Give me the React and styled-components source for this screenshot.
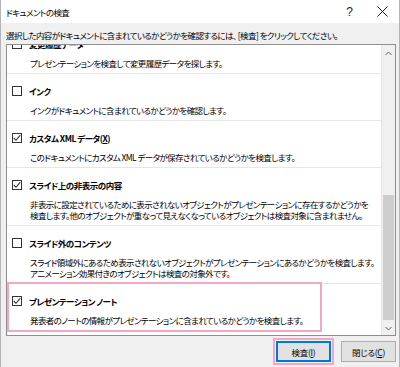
import React from "react";
import styled, { createGlobalStyle } from "styled-components";

const Global = createGlobalStyle`
  html, body { margin: 0; padding: 0; background: #f0f0f0; }
  body {
    font-family: "Noto Sans CJK JP", "Noto Sans", sans-serif;
    font-feature-settings: "palt";
    color: #000;
  }
`;

const Window = styled.div`
  width: 400px;
  height: 367px;
  box-sizing: border-box;
  background: #f0f0f0;
  border-left: 1px solid #b4b4b4;
  border-right: 1px solid #b4b4b4;
  display: flex;
  flex-direction: column;
  overflow: hidden;
`;

const TitleBar = styled.div`
  height: 23px;
  flex: none;
  background: #fff;
  display: flex;
  align-items: center;
  padding-left: 5px;
  font-size: 8.5px;
  letter-spacing: -0.6px;
`;

const TitleText = styled.div`
  flex: 1;
  line-height: 14px;
  padding-top: 1px;
`;

const TitleButton = styled.div`
  width: 33px;
  height: 23px;
  display: flex;
  align-items: center;
  justify-content: center;
  font-family: "Liberation Sans", sans-serif;
  font-size: 12px;
  letter-spacing: 0;
  color: #222;
`;

const Prompt = styled.div`
  font-size: 8.5px;
  letter-spacing: -0.6px;
  padding: 4px 0 0 5px;
  height: 17px;
  flex: none;
  line-height: 16px;
  white-space: nowrap;
`;

const ListBox = styled.div`
  margin: 0 3px 0 5px;
  height: 290px;
  flex: none;
  border: 1px solid #8f8f8f;
  background: #fff;
  display: flex;
`;

const Items = styled.div`
  flex: 1;
  overflow: hidden;
`;

const ItemsInner = styled.div`
  margin-top: -18px;
`;

const Item = styled.div`
  position: relative;
  padding: 10px 0 4px 0;
  border-bottom: 1px solid #e6e6e6;
  &:last-child { border-bottom: none; }
  ${(p) =>
    p.$highlight &&
    `
    &::after {
      content: "";
      position: absolute;
      left: 0;
      top: -2px;
      width: 315px;
      height: 50px;
      box-sizing: border-box;
      border: 2px solid #f2a7c6;
      pointer-events: none;
    }
  `}
`;

const ItemTitle = styled.div`
  display: flex;
  align-items: center;
  height: 14px;
  line-height: 14px;
  padding-left: 5px;
  font-size: 8.5px;
  letter-spacing: -0.5px;
  font-weight: bold;
  white-space: nowrap;
`;

const Box = styled.div`
  width: 10px;
  height: 10px;
  border: 1px solid #333;
  box-sizing: border-box;
  margin-right: 7px;
  display: flex;
  align-items: center;
  justify-content: center;
  background: #fff;
  flex: none;
`;

const Desc = styled.div`
  margin-top: 7px;
  padding-left: 23px;
  font-size: 8.5px;
  letter-spacing: -0.6px;
  line-height: 11px;
  white-space: nowrap;
`;

const Scrollbar = styled.div`
  width: 13px;
  flex: none;
  background: #f0f0f0;
  border-left: 1px solid #e4e4e4;
  display: flex;
  flex-direction: column;
  align-items: center;
`;

const Arrow = styled.div`
  height: 17px;
  flex: none;
  display: flex;
  align-items: center;
  justify-content: center;
`;

const Track = styled.div`
  flex: 1;
  width: 100%;
  display: flex;
  flex-direction: column;
  padding-top: ${(p) => p.$offset}px;
  box-sizing: border-box;
`;

const Thumb = styled.div`
  height: ${(p) => p.$size}px;
  margin: 0 1px;
  background: #cdcdcd;
`;

const Footer = styled.div`
  flex: 1;
  display: flex;
  justify-content: flex-end;
  align-items: flex-start;
  gap: 10px;
  padding: 5px 3px 0 0;
`;

const Button = styled.button`
  position: relative;
  width: ${(p) => p.$w}px;
  height: 21px;
  box-sizing: border-box;
  background: #e1e1e1;
  border: 1px solid ${(p) => (p.$default ? "#0078d7" : "#adadad")};
  box-shadow: ${(p) => (p.$default ? "inset 0 0 0 1px #0078d7" : "none")};
  font-family: inherit;
  font-feature-settings: "palt";
  font-size: 8.5px;
  letter-spacing: -0.3px;
  line-height: 12px;
  color: #000;
  padding: 0;
  ${(p) =>
    p.$highlight &&
    `
    &::after {
      content: "";
      position: absolute;
      inset: -4px;
      border: 2px solid #f2a7c6;
      pointer-events: none;
    }
  `}
`;

const U = styled.span`
  text-decoration: underline;
`;

const Check = ({ checked }) => (
  <Box>
    {checked && (
      <svg width="8" height="8" viewBox="0 0 8 8">
        <polyline points="0.8,4 3,6.3 7.3,1.2" fill="none" stroke="#333" strokeWidth="1.1" />
      </svg>
    )}
  </Box>
);

const items = [
  { title: "変更履歴データ", checked: false, desc: ["プレゼンテーションを検査して変更履歴データを探します。"] },
  { title: "インク", checked: false, desc: ["インクがドキュメントに含まれているかどうかを確認します。"] },
  {
    title: (
      <>
        カスタム XML データ(<U>X</U>)
      </>
    ),
    checked: true,
    desc: ["このドキュメントにカスタム XML データが保存されているかどうかを検査します。"],
  },
  {
    title: "スライド上の非表示の内容",
    checked: true,
    desc: [
      "非表示に設定されているために表示されないオブジェクトがプレゼンテーションに存在するかどうかを",
      "検査します。他のオブジェクトが重なって見えなくなっているオブジェクトは検査対象に含まれません。",
    ],
  },
  {
    title: "スライド外のコンテンツ",
    checked: false,
    desc: [
      "スライド領域外にあるため表示されないオブジェクトがプレゼンテーションにあるかどうかを検査します。",
      "アニメーション効果付きのオブジェクトは検査の対象外です。",
    ],
  },
  {
    title: "プレゼンテーション ノート",
    checked: true,
    highlight: true,
    desc: ["発表者のノートの情報がプレゼンテーションに含まれているかどうかを検査します。"],
  },
];

export default function App() {
  return (
    <>
      <Global />
      <Window>
        <TitleBar>
          <TitleText>ドキュメントの検査</TitleText>
          <TitleButton>?</TitleButton>
          <TitleButton>
            <svg width="11" height="11" viewBox="0 0 11 11">
              <path d="M0.5 0.5 L10.5 10.5 M10.5 0.5 L0.5 10.5" stroke="#222" strokeWidth="1" />
            </svg>
          </TitleButton>
        </TitleBar>
        <Prompt>選択した内容がドキュメントに含まれているかどうかを確認するには、 [検査] をクリックしてください。</Prompt>
        <ListBox>
          <Items>
            <ItemsInner>
              {items.map((it, i) => (
                <Item key={i} $highlight={it.highlight}>
                  <ItemTitle>
                    <Check checked={it.checked} />
                    <span>{it.title}</span>
                  </ItemTitle>
                  <Desc>
                    {it.desc.map((d, j) => (
                      <div key={j}>{d}</div>
                    ))}
                  </Desc>
                </Item>
              ))}
            </ItemsInner>
          </Items>
          <Scrollbar>
            <Arrow>
              <svg width="7" height="5" viewBox="0 0 7 5">
                <polyline points="0.5,4 3.5,1 6.5,4" fill="none" stroke="#606060" strokeWidth="1" />
              </svg>
            </Arrow>
            <Track $offset={133}>
              <Thumb $size={125} />
            </Track>
            <Arrow>
              <svg width="7" height="5" viewBox="0 0 7 5">
                <polyline points="0.5,1 3.5,4 6.5,1" fill="none" stroke="#606060" strokeWidth="1" />
              </svg>
            </Arrow>
          </Scrollbar>
        </ListBox>
        <Footer>
          <Button $w={55} $default $highlight>
            検査(<U>I</U>)
          </Button>
          <Button $w={55}>
            閉じる(<U>C</U>)
          </Button>
        </Footer>
      </Window>
    </>
  );
}
